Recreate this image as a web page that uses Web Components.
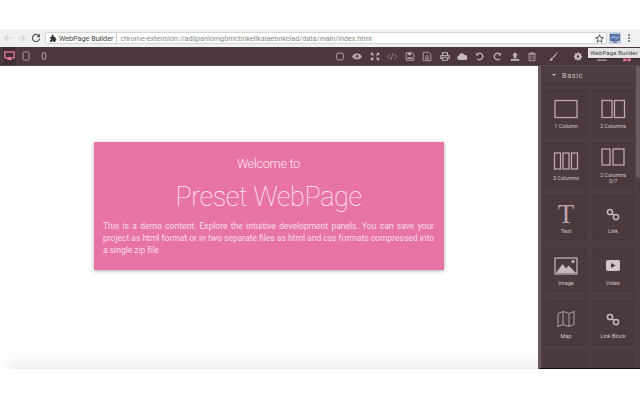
<!DOCTYPE html>
<html>
<head>
<meta charset="utf-8">
<title>WebPage Builder</title>
<style>
html,body{margin:0;height:100%;background:#fff;overflow:hidden}
body{width:640px;height:400px;display:flex;flex-direction:column;font-family:"Roboto","Liberation Sans",sans-serif;position:relative}
.top{height:29px;flex:none}
.bottom{height:31px;flex:none;background:#fff}
.main{display:flex;height:303px;flex:none}
</style>
</head>
<body>
<div class="top"></div>
<browser-bar></browser-bar>
<tool-bar></tool-bar>
<div class="main">
  <page-stage>
    <welcome-card></welcome-card>
  </page-stage>
  <block-panel title="Basic">
    <block-item label="1 Column" icon="col1"></block-item>
    <block-item label="2 Columns" icon="col2"></block-item>
    <block-item label="3 Columns" icon="col3"></block-item>
    <block-item label="2 Columns 3/7" icon="col37"></block-item>
    <block-item label="Text" icon="text"></block-item>
    <block-item label="Link" icon="link"></block-item>
    <block-item label="Image" icon="image"></block-item>
    <block-item label="Video" icon="video"></block-item>
    <block-item label="Map" icon="map"></block-item>
    <block-item label="Link Block" icon="link"></block-item>
    <block-item label="" icon="none"></block-item>
    <block-item label="" icon="bar"></block-item>
  </block-panel>
</div>
<div class="bottom"></div>
<script>
const svg=(w,h,body)=>`<svg width="${w}" height="${h}" viewBox="0 0 ${w} ${h}">${body}</svg>`

class BrowserBar extends HTMLElement{
  constructor(){
    super()
    this.attachShadow({mode:'open'})
    this.shadowRoot.innerHTML=`
<style>
:host{display:flex;align-items:center;height:18px;flex:none;background:#f1f0f0;box-sizing:border-box;position:relative;font-family:"Roboto","Liberation Sans",sans-serif}
.nav{display:flex;width:14px;justify-content:center;flex:none}
.navs{display:flex;padding-left:1px;width:44px;box-sizing:border-box;flex:none}
.addr{display:flex;align-items:center;height:12px;width:562px;flex:none;background:#fff;border:1px solid #d4d4d4;border-radius:2px;box-sizing:border-box;font-size:7.2px;white-space:nowrap;padding-left:3px;margin-left:1px}
.name{color:#444;margin-left:2px}
.sep{width:1px;height:9px;background:#c4c4c4;margin:0 3px 0 3px}
.url{color:#8a8a8a;flex:1}
.star{margin-right:2px;display:flex}
.ext{width:12px;height:12px;background:#c9d0dc;margin-left:2px;display:flex;align-items:center;justify-content:center;flex:none}
.dots{width:2px;margin-left:7px;display:flex;flex-direction:column;gap:1.5px}
.dots i{display:block;width:1.6px;height:1.6px;background:#777;border-radius:50%}
</style>
<div class="navs">
  <span class="nav">${svg(10,10,'<path d="M9 5H2M5 2 2 5l3 3" fill="none" stroke="#d0d0d0" stroke-width="1.1"/>')}</span>
  <span class="nav">${svg(10,10,'<path d="M1 5h7M5 2l3 3-3 3" fill="none" stroke="#d0d0d0" stroke-width="1.1"/>')}</span>
  <span class="nav">${svg(10,10,'<path d="M8.2 3.2A3.6 3.6 0 1 0 8.6 5.6" fill="none" stroke="#555" stroke-width="1.2"/><path d="M9 .8v3.4H5.6z" fill="#555"/>')}</span>
</div>
<div class="addr">
  ${svg(8,8,'<path d="M1 3h1.6V1.6a1 1 0 0 1 2 0V3H6.4v1.600a1 1 0 0 1 0 2V8H4.600a1 1 0 0 0-2 0H1V6.200a1 1 0 0 0 0-2z" fill="#333"/>')}
  <span class="name">WebPage Builder</span><span class="sep"></span>
  <span class="url">chrome-extension://adljpanlomgbmcbnkelikalaebnkelad/data/main/index.html</span>
  <span class="star">${svg(9,9,'<path d="M4.500.8 5.600 3.400l2.800.2-2.100 1.800.7 2.800-2.500-1.500-2.500 1.500.7-2.800L.6 3.600l2.800-.2z" fill="none" stroke="#444" stroke-width=".9"/>')}</span>
</div>
<div class="ext">${svg(10,9,'<rect x=".5" y=".5" width="9" height="6" fill="#5a78b0" stroke="#4a5f90" stroke-width=".8"/><path d="M1.500 4 4 2.500 6 4.500 9 3" stroke="#e0e6f0" stroke-width=".8" fill="none"/><rect x="3" y="7.400" width="4" height="1.200" fill="#4a5f90"/>')}</div>
<div class="dots"><i></i><i></i><i></i></div>
`
  }
}

const toolIcons={
  square:'<rect x="3" y="2.500" width="8" height="8" rx="1.600" fill="none" stroke="#b5a4a8" stroke-width="1.100"/>',
  eye:'<path d="M1 6.500C3 3.600 5 3 7 3s4 .6 6 3.500C11 9.400 9 10 7 10S3 9.400 1 6.500z" fill="#b5a4a8"/><circle cx="7" cy="6.400" r="1.700" fill="#5a494d"/>',
  expand:'<path d="M2 2h3.200L4.200 3.200 5.800 4.800 4.800 5.800 3.200 4.200 2 5.200zM12 2v3.200L10.800 4.200 9.200 5.800 8.200 4.800 9.800 3.200 8.800 2zM2 11V7.800L3.200 8.800 4.800 7.200 5.800 8.200 4.200 9.800 5.200 11zM12 11H8.800L9.800 9.800 8.200 8.200 9.200 7.200 10.800 8.800 12 7.800z" fill="#c8babd"/>',
  code:'<path d="M4.500 3.500 1.500 6.500l3 3M9.500 3.500l3 3-3 3M8 2.500l-2 8" fill="none" stroke="#b5a4a8" stroke-width=".8"/>',
  save:'<path d="M2.500 2h7l2 2v7h-9z" fill="none" stroke="#b5a4a8" stroke-width="1.100"/><rect x="4.500" y="2" width="4" height="3" fill="#b5a4a8"/><rect x="4" y="7.500" width="6" height="2" fill="#b5a4a8"/>',
  file:'<path d="M2.500 1.500H9l2.500 2.500v7.500h-9z" fill="none" stroke="#b5a4a8" stroke-width="1.100"/><path d="M5 8.500 7 4.500l2 4zM4.500 9.500h5" fill="none" stroke="#b5a4a8" stroke-width=".9"/>',
  print:'<path d="M4 5V2h6v3M4 9H2V5.500h10V9h-2" fill="none" stroke="#c8babd" stroke-width="1.200"/><rect x="4" y="8" width="6" height="3" fill="none" stroke="#c8babd" stroke-width="1"/>',
  cloud:'<path d="M3.500 10.500a2.500 2.500 0 0 1-.4-4.900 3.700 3.700 0 0 1 7-.9 2.900 2.900 0 0 1 .6 5.800z" fill="#c8babd"/>',
  undo:'<path d="M4.200 3.300A3.800 3.800 0 1 1 3.600 9" fill="none" stroke="#c8babd" stroke-width="1.400"/><path d="M2.400 1.800v3.400h3.400z" fill="#c8babd"/>',
  redo:'<path d="M9.800 3.300A3.800 3.800 0 1 0 10.400 9" fill="none" stroke="#c8babd" stroke-width="1.400"/><path d="M11.600 1.800v3.400H8.200z" fill="#c8babd"/>',
  upload:'<path d="M7 1.500 10.500 5H8.500v3.500h-3V5H3.500z" fill="#c8babd"/><rect x="2" y="9.500" width="10" height="2" fill="#c8babd"/>',
  trash:'<path d="M3.500 4h7v7.500h-7z" fill="none" stroke="#b5a4a8" stroke-width="1.100"/><path d="M2.500 3h9M5.500 3V1.800h3V3M5.700 5.500v4.500M8.300 5.500v4.500" stroke="#b5a4a8" stroke-width=".9" fill="none"/>',
  brush:'<path d="M12 1.500 6.200 7.400 7.400 8.600 12.500 2z" fill="#c8babd"/><path d="M5.600 8c-1.400.2-1.300 1.700-1.900 2.500-.4.500-1 .7-1.700.9 1.700.5 4.500.3 5-2.300z" fill="#c8babd"/>',
  gear:'<circle cx="7" cy="6.500" r="2.900" fill="none" stroke="#c8babd" stroke-width="2"/><path d="M7 1.500v10M2 6.500h10M3.500 3l7 7M10.500 3l-7 7" stroke="#c8babd" stroke-width="1.500"/><circle cx="7" cy="6.500" r="1.400" fill="#4a383c"/>',
  dash:'<rect x="1" y="10" width="12" height="1.500" fill="#b5a4a8"/>',
  pink:'<rect x="2.500" y="8" width="4" height="4" fill="#e874a6"/><rect x="7.500" y="8" width="4" height="4" fill="#e874a6"/>'
}
class ToolBar extends HTMLElement{
  constructor(){
    super()
    this.attachShadow({mode:'open'})
    const btn=n=>`<span class="b">${svg(14,13,toolIcons[n])}</span>`
    const wide=n=>`<span class="w">${svg(14,13,toolIcons[n])}</span>`
    this.shadowRoot.innerHTML=`
<style>
:host{display:flex;align-items:center;height:19px;flex:none;background:#4a383c;padding-right:1px;box-sizing:border-box;position:relative;border-bottom:1px solid #5a4a4e}
.dev{display:flex;align-items:center;height:100%;padding-left:3px}
.dev span{width:18px;height:18px;display:flex;align-items:center;justify-content:center;flex:none}
.dev .on{background:#3f2f33;width:13px;margin-right:1px}
.group{display:flex;margin-left:auto}
.b{width:17.500px;display:flex;justify-content:center}
.w{width:24.500px;display:flex;justify-content:center}
.b svg,.w svg{width:12px;height:11px}
.tip{position:absolute;left:588px;top:1px;width:52px;height:10px;background:#e4e2e2;color:#444;font:6px/10px "Roboto","Liberation Sans",sans-serif;letter-spacing:.15px;text-align:center;white-space:nowrap;box-shadow:0 1px 1px rgba(0,0,0,.3)}
</style>
<div class="dev">
  <span class="on">${svg(11,10,'<rect x=".8" y="1" width="9.400" height="5.800" fill="none" stroke="#e874a6" stroke-width="1.300"/><path d="M3 9h5L6.800 6.800H4.200z" fill="#e874a6"/>')}</span>
  <span>${svg(8,10,'<rect x="1" y=".8" width="6" height="8.400" rx="1.300" fill="none" stroke="#a8989b" stroke-width="1"/>')}</span>
  <span>${svg(6,8,'<rect x="1.300" y=".7" width="3.400" height="6.600" rx=".8" fill="none" stroke="#b8a8ab" stroke-width="1"/>')}</span>
</div>
<div class="group">
  ${['square','eye','expand','code','save','file','print','cloud','undo','redo','upload','trash'].map(btn).join('')}
</div>
<div class="group" style="margin-left:0">
  ${['brush','gear','dash','pink'].map(wide).join('')}
</div>
<div class="tip">WebPage Builder</div>
`
  }
}

class PageStage extends HTMLElement{
  constructor(){
    super()
    this.attachShadow({mode:'open'})
    this.shadowRoot.innerHTML=`
<style>
:host{display:block;flex:1;min-width:0;background:linear-gradient(to right,#fff 0,rgba(255,255,255,0) 18px),linear-gradient(to bottom,#fff 0,#fff 282px,#fbfbfb 292px,#efefef 303px);padding-top:76px;box-sizing:border-box}
</style>
<slot></slot>
`
  }
}

class WelcomeCard extends HTMLElement{
  constructor(){
    super()
    this.attachShadow({mode:'open'})
    this.shadowRoot.innerHTML=`
<style>
:host{display:block;width:350px;height:128px;margin-left:94px;background:#e874a6;color:#fde6f0;box-sizing:border-box;padding:13px 10px 0 9px;box-shadow:0 1px 4px rgba(0,0,0,.3);font-family:"Roboto","Liberation Sans",sans-serif}
h3,h1,p{margin:0;font-weight:300}
h3{font-size:12.500px;line-height:18px;text-align:center;letter-spacing:-.2px}
h1{font-size:27px;line-height:36px;margin-top:6px;text-align:center;font-weight:100;letter-spacing:-.4px;color:#fff0f6}
p{font-size:8.500px;line-height:12px;margin-top:5px;text-align:justify;font-weight:400;color:#fbdcea}
</style>
<h3>Welcome to</h3>
<h1>Preset WebPage</h1>
<p>This is a demo content. Explore the intuitive development panels. You can save your project as html format or in two separate files as html and css formats compressed into a single zip file</p>
`
  }
}

class BlockPanel extends HTMLElement{
  constructor(){
    super()
    this.attachShadow({mode:'open'})
    this.shadowRoot.innerHTML=`
<style>
:host{display:block;width:102px;flex:none;height:303px;background:#4e3d41;border-left:3px solid #6b5b5f;border-bottom:1px solid #0a0a0a;box-sizing:border-box;overflow:hidden;position:relative;font-family:"Roboto","Liberation Sans",sans-serif}
.head{display:flex;align-items:center;height:18px;padding-left:11px;border-bottom:1px solid #453539;color:#cfc3c5;font-size:7.200px;letter-spacing:.7px;gap:6px}
.head i{width:0;height:0;border:2.200px solid transparent;border-top:2.500px solid #cfc3c5;margin-top:2px}
.grid{display:grid;grid-template-columns:42px 42px;grid-auto-rows:44.500px;column-gap:5px;row-gap:8px;padding:5px 0 0 4px}
.bar{position:absolute;right:0;top:0;width:4px;height:112px;background:#6b5b5f;border-radius:2px}
</style>
<div class="head"><i></i><span></span></div>
<div class="grid"><slot></slot></div>
<div class="bar"></div>
`
    this.shadowRoot.querySelector('span').textContent=this.getAttribute('title')
  }
}

const blockIcons={
  col1:svg(26,20,'<rect x="2" y="1.500" width="22" height="17" fill="none" stroke="#bfa9ad" stroke-width="1.300"/>'),
  col2:svg(26,20,'<rect x="2" y="1.500" width="10" height="17" fill="none" stroke="#bfa9ad" stroke-width="1.300"/><rect x="14.500" y="1.500" width="10" height="17" fill="none" stroke="#bfa9ad" stroke-width="1.300"/>'),
  col3:svg(26,20,'<rect x="1.500" y="2" width="6" height="16" fill="none" stroke="#bfa9ad" stroke-width="1.300"/><rect x="10" y="2" width="6" height="16" fill="none" stroke="#bfa9ad" stroke-width="1.300"/><rect x="18.500" y="2" width="6" height="16" fill="none" stroke="#bfa9ad" stroke-width="1.300"/>'),
  col37:svg(26,20,'<rect x="2" y="1" width="8" height="16" fill="none" stroke="#bfa9ad" stroke-width="1.300"/><rect x="13" y="1" width="11" height="16" fill="none" stroke="#bfa9ad" stroke-width="1.300"/>'),
  text:'<span class="t">T</span>',
  link:svg(26,20,'<g fill="none" stroke="#c8b8bb" stroke-width="1.500"><circle cx="10" cy="8" r="2.600"/><circle cx="16" cy="13" r="2.600"/><path d="M11.500 9.500 14.500 11.500"/></g>'),
  image:svg(26,20,'<rect x="2" y="2" width="22" height="16" fill="none" stroke="#c8b8bb" stroke-width="1.200"/><path d="M3 17 9.500 8l3.500 4.500 2.500-3L23 17z" fill="#c8b8bb"/><circle cx="20" cy="5.500" r="1.600" fill="#c8b8bb"/>'),
  video:svg(26,20,'<rect x="6" y="4" width="14" height="11" rx="2" fill="#d2c6c8"/><path d="M11 7v5l4.500-2.500z" fill="#4e3d41"/>'),
  map:svg(26,20,'<path d="M5 4.500 10 2.500 16 4.500 21 2.500V15.500L16 17.500 10 15.500 5 17.500zM10 2.500V15.500M16 4.500V17.500" fill="none" stroke="#a8989b" stroke-width="1.100"/>'),
  bar:svg(26,20,'<rect x="5" y="8" width="15" height="3" fill="#c8b8bb"/>'),
  none:''
}
class BlockItem extends HTMLElement{
  constructor(){
    super()
    this.attachShadow({mode:'open'})
    this.shadowRoot.innerHTML=`
<style>
:host{display:flex;flex-direction:column;align-items:center;justify-content:center;background:#4a393d;border:1px solid #453539;box-sizing:border-box;color:#d2c6c8;font-size:5.500px;line-height:6px;text-align:center;padding:2px 6px 0}
.ic{height:22px;display:flex;align-items:center;justify-content:center;flex:none}
.t{font:27px/22px "Liberation Serif",serif;color:#b9a4a8}
.lb{margin-top:3px}
</style>
<div class="ic">${blockIcons[this.getAttribute('icon')]}</div>
<div class="lb"></div>
`
    this.shadowRoot.querySelector('.lb').textContent=this.getAttribute('label')
  }
}

customElements.define('browser-bar',BrowserBar)
customElements.define('tool-bar',ToolBar)
customElements.define('page-stage',PageStage)
customElements.define('welcome-card',WelcomeCard)
customElements.define('block-panel',BlockPanel)
customElements.define('block-item',BlockItem)
</script>
</body>
</html>
